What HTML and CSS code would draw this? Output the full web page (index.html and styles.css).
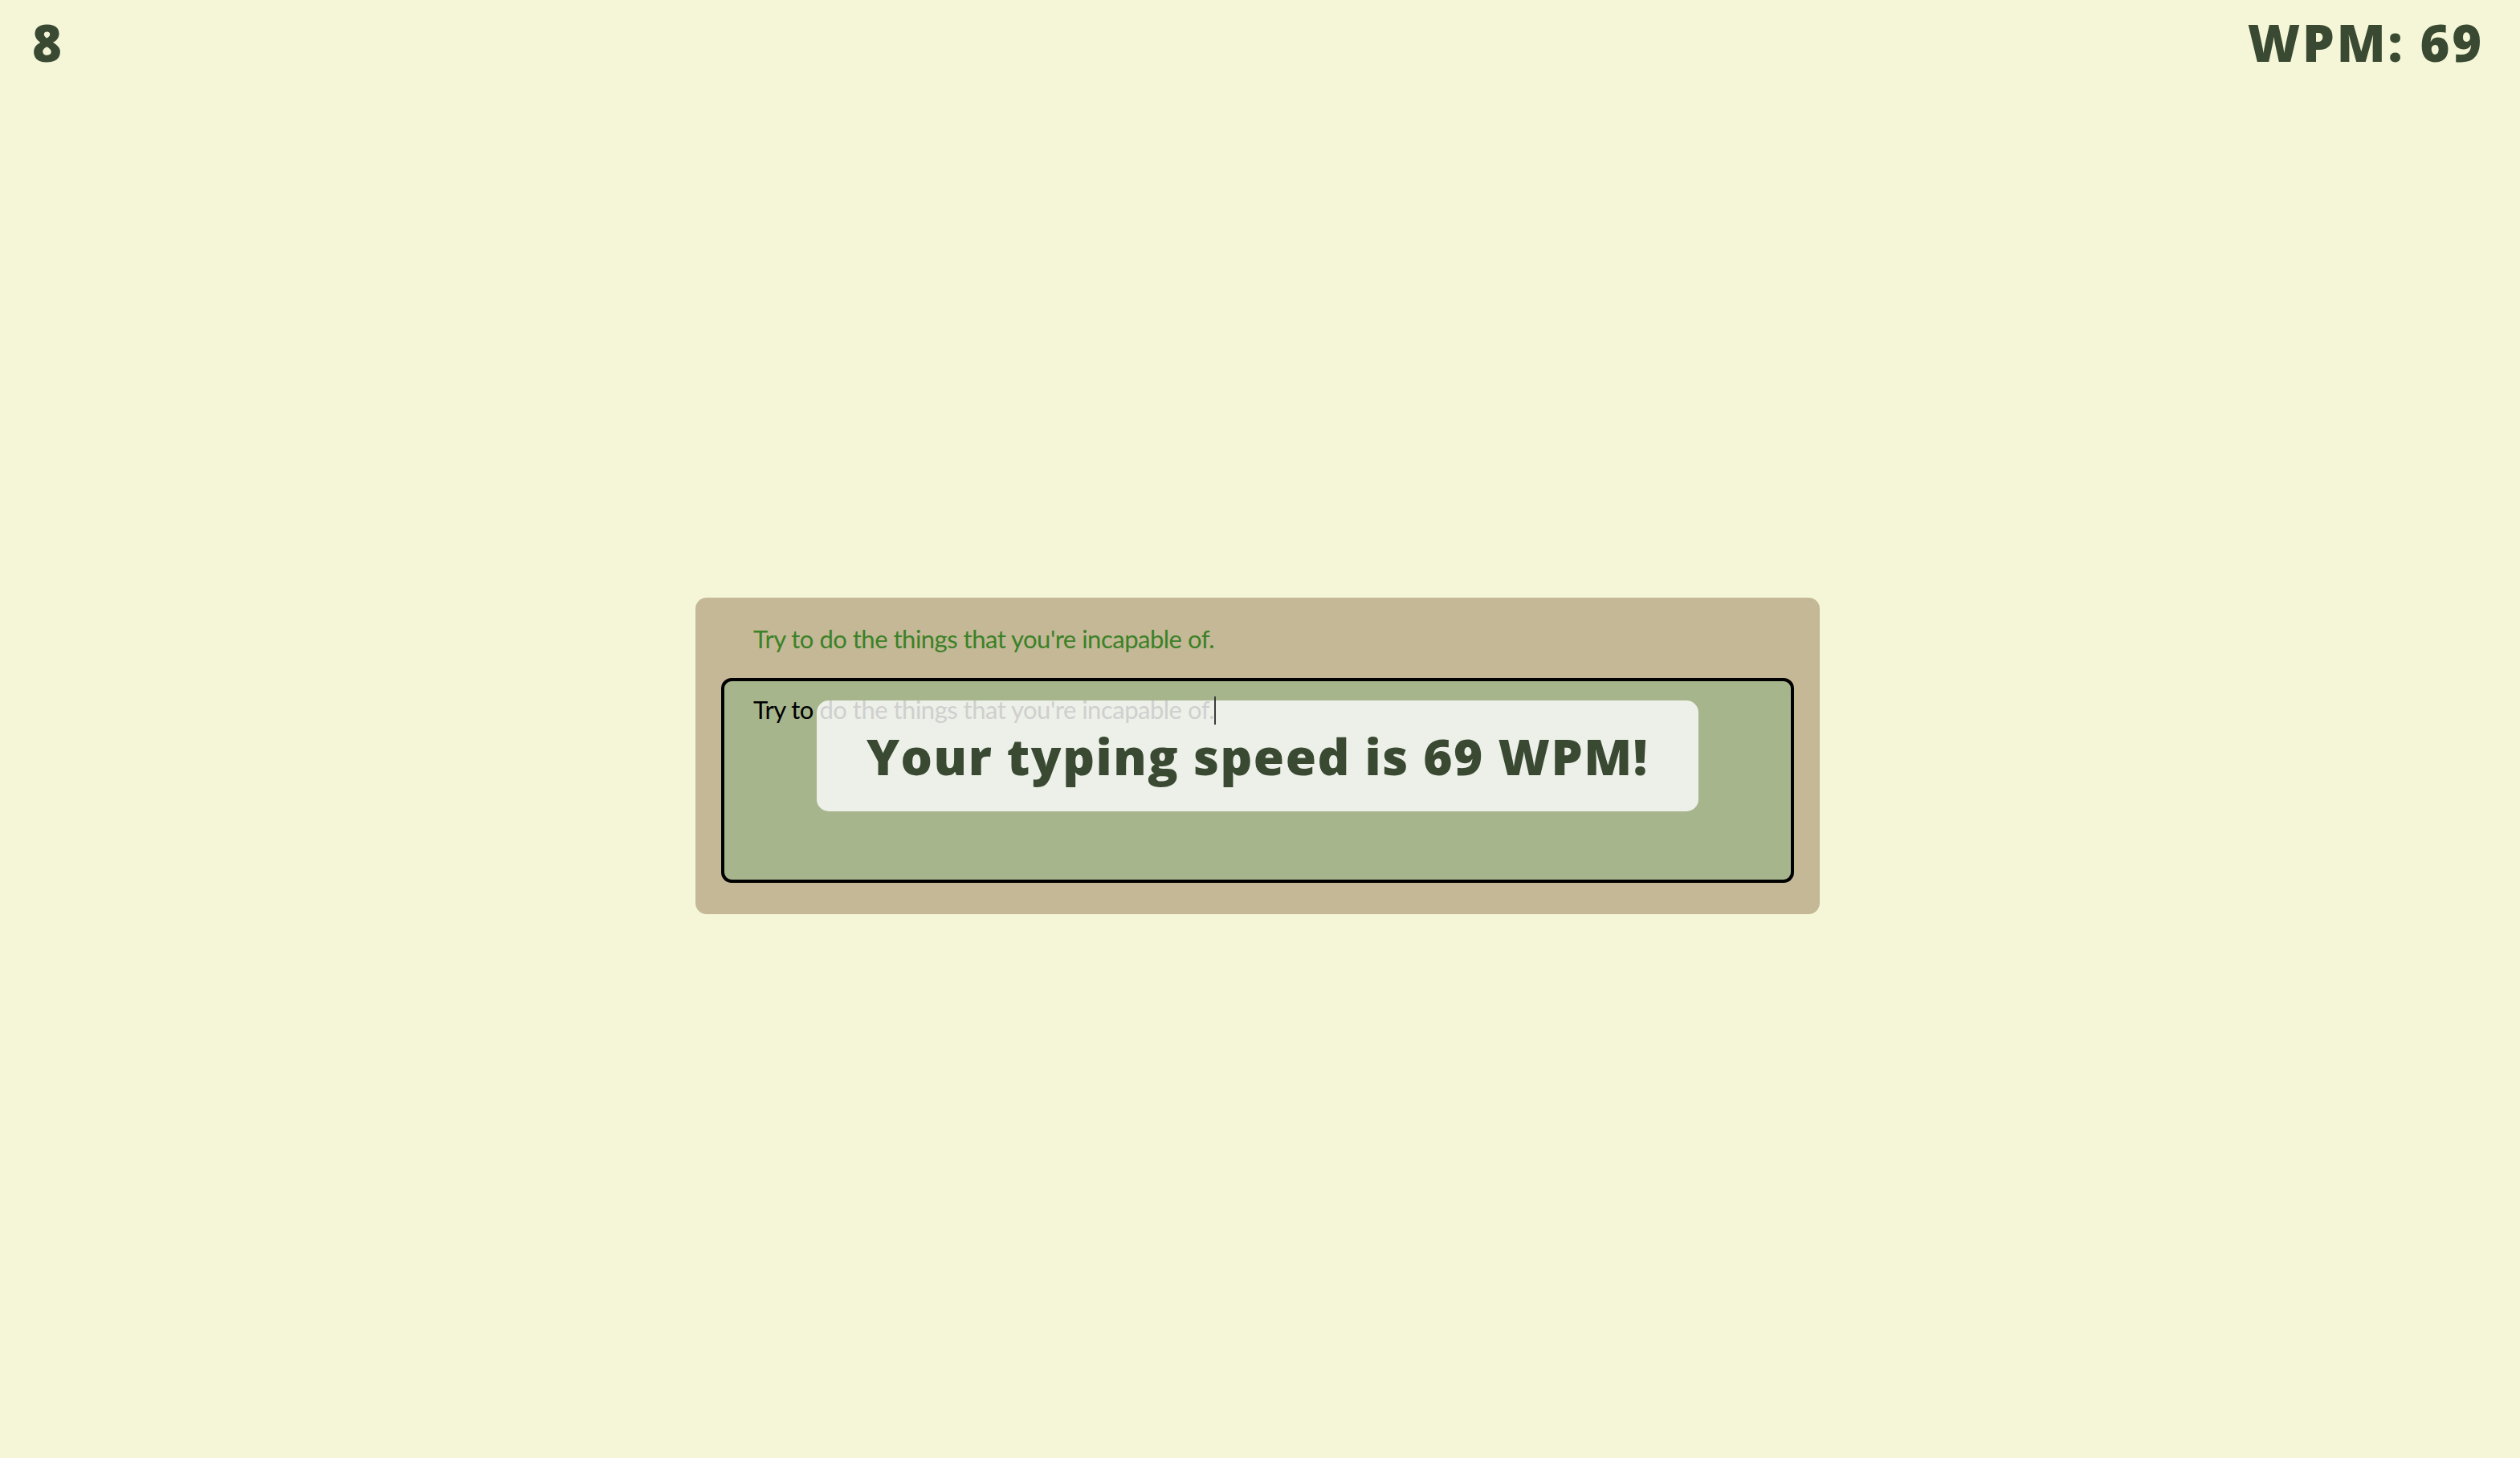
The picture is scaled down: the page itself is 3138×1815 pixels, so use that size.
FILE: index.html
```html
<!DOCTYPE html>
<html lang="en">
<head>
<meta charset="utf-8">
<title>Typing Test</title>
<link rel="stylesheet" href="styles.css">
</head>
<body>
  <header class="topbar">
    <div class="stat stat-count">8</div>
    <div class="stat stat-wpm">WPM: 69</div>
  </header>
  <main class="stage">
    <section class="card">
      <p class="prompt">Try to do the things that you're incapable of.</p>
      <div class="input-box">
        <p class="typed"><span class="typed-done">Try to</span> <span class="typed-rest">do the things that you're incapable of.</span><span class="caret"></span></p>
        <div class="result">Your typing speed is 69 WPM!</div>
      </div>
    </section>
  </main>
</body>
</html>
```

FILE: styles.css
```css
html, body {
  margin: 0;
  padding: 0;
}

body {
  background: #f4f6d7;
  font-family: Lato, "Open Sans", "Liberation Sans", sans-serif;
  color: #3a4a32;
  height: 1815px;
  display: flex;
  flex-direction: column;
}

.topbar {
  display: flex;
  justify-content: space-between;
  align-items: flex-start;
  padding: 15px 45px 0 40px;
}

.stat {
  font-family: "Open Sans", Lato, sans-serif;
  font-size: 63px;
  font-weight: 800;
  letter-spacing: 2.8px;
  line-height: 1.2;
  color: #3a4a32;
}

.stage {
  flex: 1;
  display: flex;
  align-items: center;
  justify-content: center;
  padding-bottom: 24px;
  padding-right: 6px;
}

.card {
  width: 1400px;
  box-sizing: border-box;
  background: #c4b896;
  border-radius: 14px;
  padding: 33px 32px 39px;
}

.prompt {
  margin: 0 0 30px;
  padding-left: 40px;
  font-size: 31px;
  letter-spacing: -0.5px;
  line-height: 1.2;
  color: #3b8127;
}

.input-box {
  position: relative;
  height: 255px;
  box-sizing: border-box;
  background: #a6b58c;
  border: 4px solid #000;
  border-radius: 13px;
  padding: 17px 36px;
}

.typed {
  position: relative;
  z-index: 1;
  margin: 0;
  font-size: 31px;
  letter-spacing: -0.5px;
  line-height: 1.2;
  white-space: nowrap;
}

.typed-done {
  color: #000;
}

.typed-rest {
  color: #cfcfcf;
}

.caret {
  display: inline-block;
  width: 2px;
  height: 35px;
  background: #3a3a3a;
  vertical-align: -7px;
}

.result {
  position: absolute;
  left: 50%;
  top: 24px;
  transform: translateX(-50%);
  width: 1098px;
  height: 138px;
  background: #edf0e8;
  border-radius: 15px;
  display: flex;
  align-items: center;
  justify-content: center;
  font-family: "Open Sans", Lato, sans-serif;
  font-size: 62px;
  font-weight: 800;
  letter-spacing: 1.5px;
  color: #3a4a32;
  white-space: nowrap;
}
```
